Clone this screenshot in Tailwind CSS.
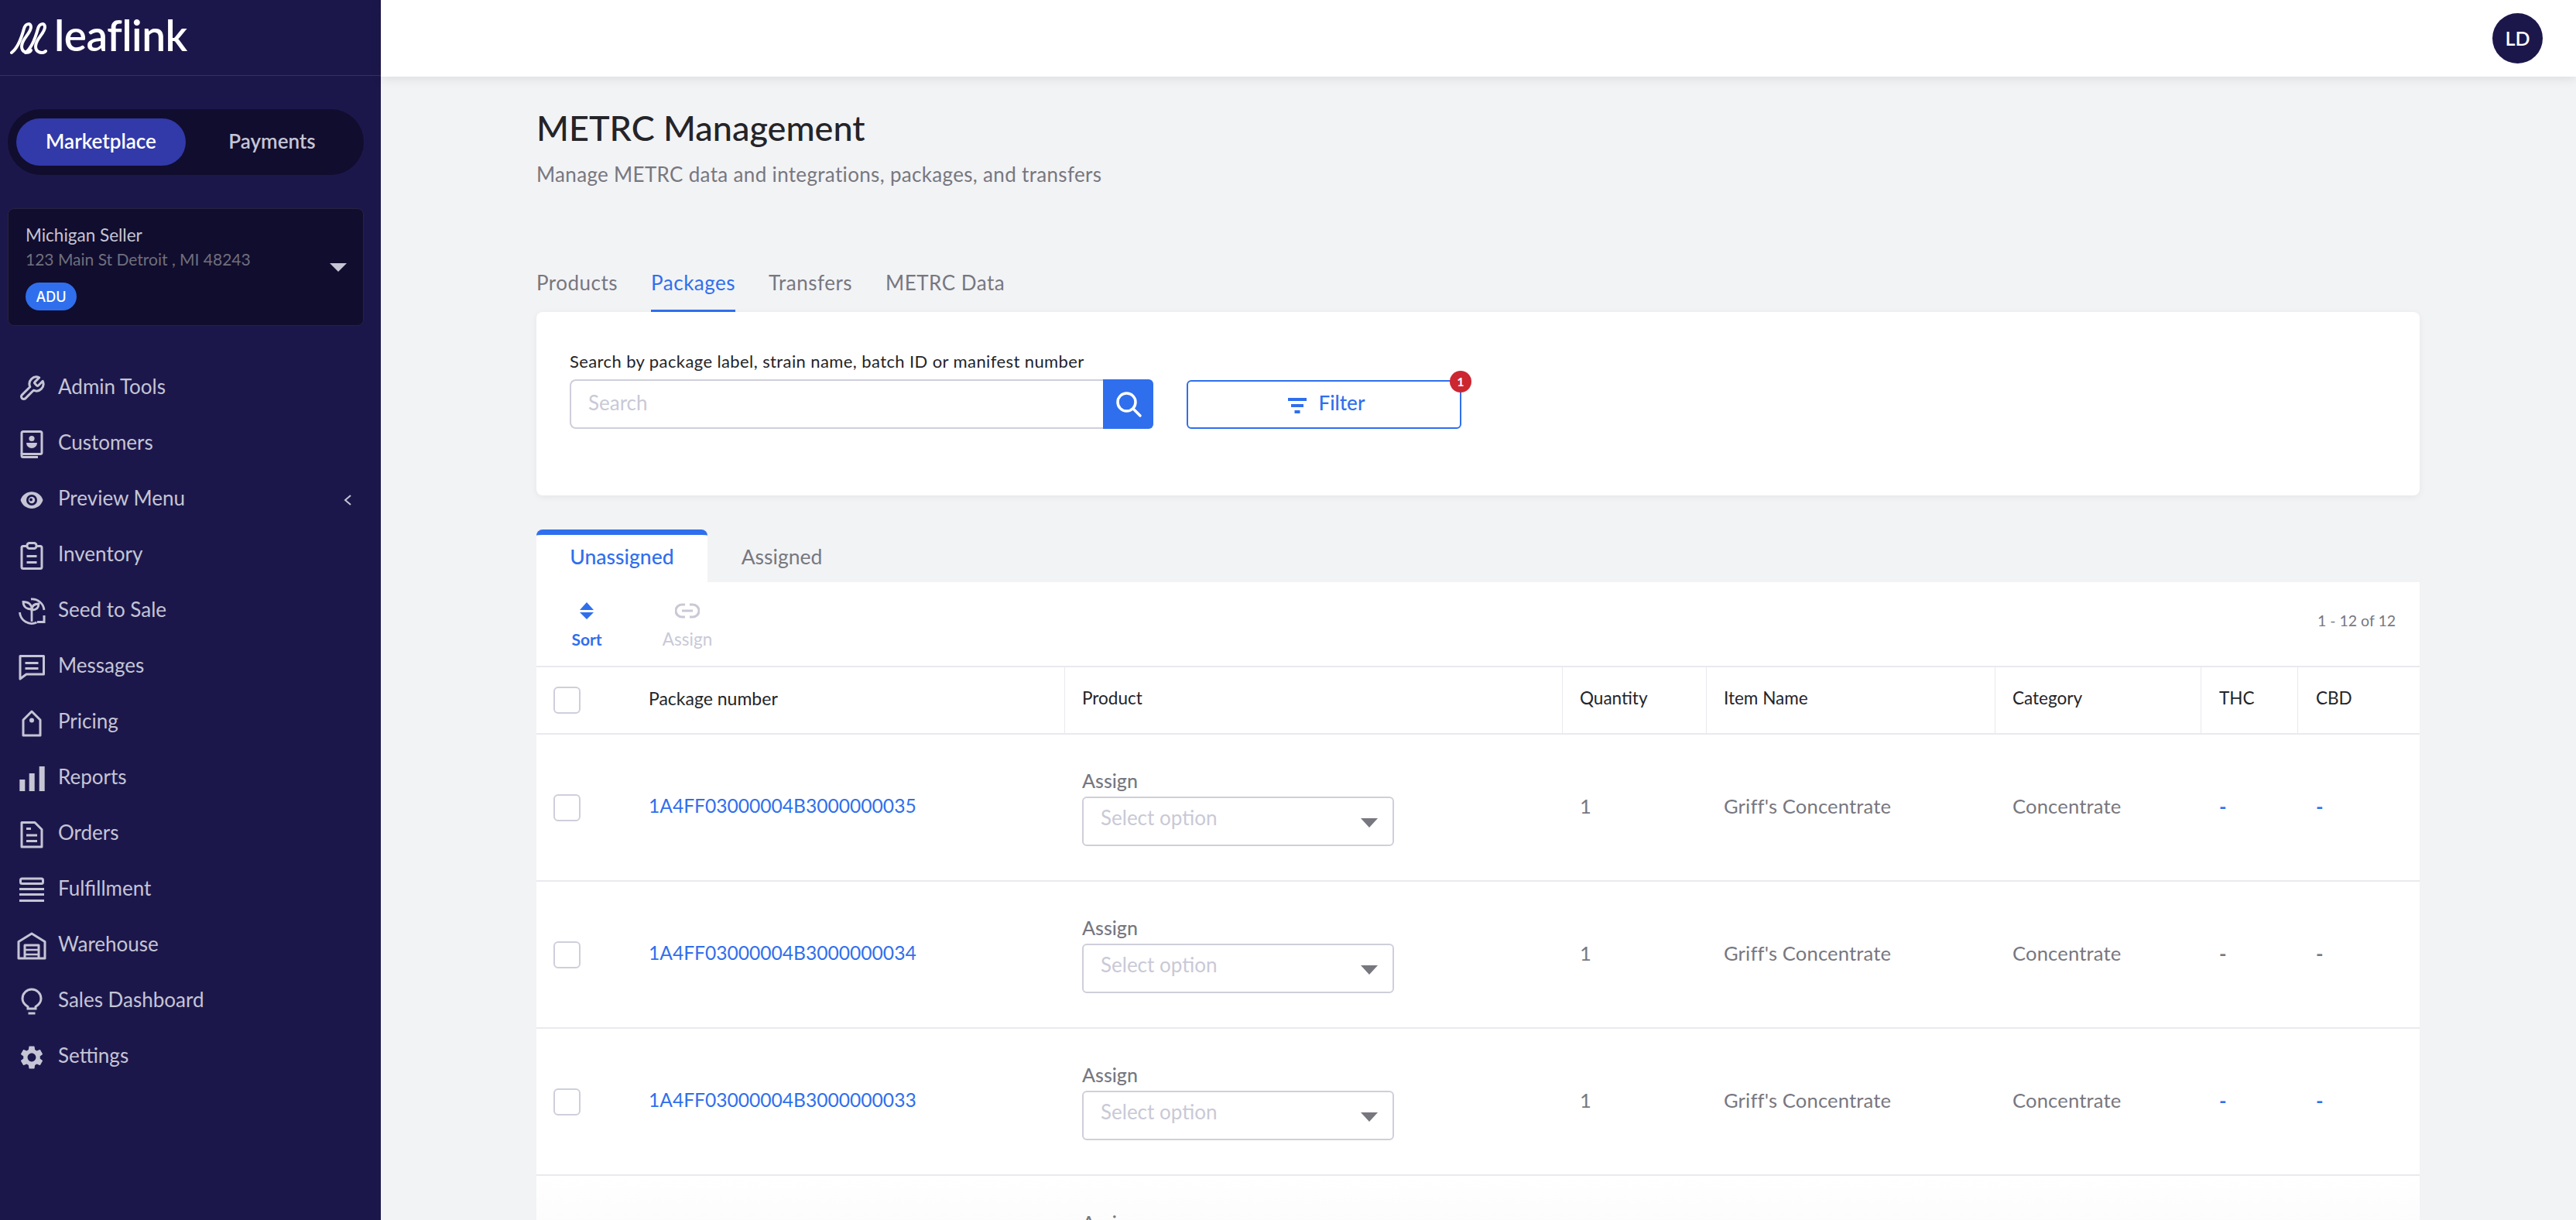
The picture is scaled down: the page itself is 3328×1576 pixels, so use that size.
<!DOCTYPE html>
<html lang="en">
<head>
<meta charset="utf-8">
<title>METRC Management</title>
<script src="https://cdn.jsdelivr.net/npm/@tailwindcss/browser@4"></script>
</head>
<body class="font-['Lato',sans-serif] bg-[#f2f3f5]">
<div class="flex h-[1576px] w-[3328px] overflow-hidden">
  <aside class="w-[492px] shrink-0 bg-[#1c174b] text-[#c5c5d5]">
    <div class="flex h-[98px] items-center gap-[9px] border-b border-[#35315f] pl-[13px]">
      <svg class="h-[42px] w-[48px]" viewBox="0 0 48 42" fill="none" stroke="#fff" stroke-width="4" stroke-linecap="round"><path d="M2 40C10 34 15 20 18 9C20 2 27 1 27 7C27 15 15 22 15 32C15 40 24 42 27 37"/><path d="M20 40C28 34 33 20 36 9C38 2 45 1 45 7C45 15 33 22 33 32C33 40 42 42 46 38"/></svg>
      <span class="pb-[6px] text-[55px] leading-none font-semibold tracking-[-0.5px] text-white">leaflink</span>
    </div>
    <div class="ml-[10px] mr-[22px] mt-[43px] flex h-[85px] items-center rounded-full bg-[#110d2e] px-[11px] text-[26px] font-semibold">
      <div class="flex h-[61px] w-[219px] items-center justify-center rounded-full bg-[#3239a9] pb-[2px] text-white">Marketplace</div>
      <div class="flex h-[61px] w-[219px] items-center justify-center pb-[2px] pl-[4px]">Payments</div>
    </div>
    <div class="relative ml-[10px] mr-[22px] mt-[43px] h-[152px] rounded-[8px] border border-[#26223f] bg-[#110d2e] pl-[22px] pt-[18px]">
      <div class="text-[22.5px] leading-[32px] text-[#c5c5d5]">Michigan Seller</div>
      <div class="text-[21px] leading-[30px] text-[#6f6f7d]">123 Main St Detroit , MI 48243</div>
      <div class="mt-[15px] flex h-[36px] w-[66px] items-center justify-center rounded-full bg-[#2f6fed] font-['Inter',sans-serif] text-[18px] font-medium text-white">ADU</div>
      <div class="absolute right-[21px] top-[70px] h-0 w-0 border-x-[11px] border-t-[11px] border-x-transparent border-t-[#c5c5d5]"></div>
    </div>
    <nav class="mt-[45px] text-[26px]">
      <a class="flex h-[72px] items-center pl-[23px]"><svg class="h-[36px] w-[36px]" viewBox="0 0 24 24" fill="none" stroke="#c5c5d5" stroke-width="2" stroke-linejoin="round"><path d="M14.7 6.3a1 1 0 0 0 0 1.4l1.6 1.6a1 1 0 0 0 1.4 0l3.77-3.77a6 6 0 0 1-7.94 7.94l-6.91 6.91a2.12 2.12 0 0 1-3-3l6.91-6.91a6 6 0 0 1 7.94-7.94l-3.76 3.76z"/></svg><span class="ml-[16px] pb-[6px]">Admin Tools</span></a>
      <a class="flex h-[72px] items-center pl-[23px]"><svg class="h-[36px] w-[36px]" viewBox="0 0 36 36" fill="none" stroke="#c5c5d5" stroke-width="3"><rect x="5" y="1.5" width="26" height="29" rx="2"/><path d="M5 29v3.5a2 2 0 0 0 2 2h19"/><circle cx="18" cy="10.5" r="3.6" fill="#c5c5d5" stroke="none"/><path d="M11 16h14a7 7 0 0 1-14 0z" fill="#c5c5d5" stroke="none"/></svg><span class="ml-[16px] pb-[6px]">Customers</span></a>
      <a class="flex h-[72px] items-center pl-[23px] pr-[37px]"><svg class="h-[36px] w-[36px]" viewBox="0 0 36 36"><path d="M3.500 18C8 3.500 28 3.500 32.500 18C28 32.500 8 32.500 3.500 18Z" fill="#c5c5d5"/><circle cx="18" cy="18" r="7" fill="#1c174b"/><circle cx="18" cy="18" r="4.200" fill="#c5c5d5"/><circle cx="17" cy="17.500" r="2" fill="#1c174b"/></svg><span class="ml-[16px] flex-1 pb-[6px]">Preview Menu</span><svg class="h-[16px] w-[12px]" viewBox="0 0 12 16" fill="none" stroke="#c5c5d5" stroke-width="2"><path d="M10 2L3 8l7 6"/></svg></a>
      <a class="flex h-[72px] items-center pl-[23px]"><svg class="h-[36px] w-[36px]" viewBox="0 0 36 36" fill="none" stroke="#c5c5d5" stroke-width="3"><rect x="5" y="5.500" width="26" height="29" rx="2"/><rect x="12" y="1.500" width="12" height="7" rx="3" fill="#1c174b"/><path d="M11.500 18.500h13M11.500 26.500h13"/></svg><span class="ml-[16px] pb-[6px]">Inventory</span></a>
      <a class="flex h-[72px] items-center pl-[23px]"><svg class="h-[36px] w-[36px]" viewBox="0 0 36 36" fill="none" stroke="#c5c5d5" stroke-width="2.800"><path d="M17 2a15.500 15.500 0 0 1 17 14"/><path d="M2.500 19a15.500 15.500 0 0 0 22 13"/><path d="M34 23v8.500h-9" stroke-width="3"/><path d="M18 15v16"/><path d="M18 15c0-6-4-9.500-11-9.500 0 6 4 9.500 11 9.500z"/><path d="M18 16c0-5 3-8 9-8 0 5-3 8-9 8z"/></svg><span class="ml-[16px] pb-[6px]">Seed to Sale</span></a>
      <a class="flex h-[72px] items-center pl-[23px]"><svg class="h-[36px] w-[36px]" viewBox="0 0 36 36" fill="none" stroke="#c5c5d5" stroke-width="3" stroke-linejoin="round"><path d="M3 3.500H33.500V27H11L3 33Z"/><path d="M9.500 12.500h17M9.500 19.500h17"/></svg><span class="ml-[16px] pb-[6px]">Messages</span></a>
      <a class="flex h-[72px] items-center pl-[23px]"><svg class="h-[36px] w-[36px]" viewBox="0 0 36 36" fill="none" stroke="#c5c5d5" stroke-width="3" stroke-linejoin="round"><path d="M7 34V14L18 3L29 14V34Z"/><circle cx="18" cy="14.500" r="3" fill="#c5c5d5" stroke="none"/></svg><span class="ml-[16px] pb-[6px]">Pricing</span></a>
      <a class="flex h-[72px] items-center pl-[23px]"><svg class="h-[36px] w-[36px]" viewBox="0 0 36 36" fill="#c5c5d5"><rect x="2.300" y="19" width="7" height="15"/><rect x="14.700" y="11" width="7" height="23"/><rect x="27.700" y="2" width="7" height="32"/></svg><span class="ml-[16px] pb-[6px]">Reports</span></a>
      <a class="flex h-[72px] items-center pl-[23px]"><svg class="h-[36px] w-[36px]" viewBox="0 0 36 36" fill="none" stroke="#c5c5d5" stroke-width="3" stroke-linejoin="round"><path d="M5 2.500H22L31 11.500V34H5Z"/><path d="M11 10.500h6M11 19h14M11 26.500h14"/></svg><span class="ml-[16px] pb-[6px]">Orders</span></a>
      <a class="flex h-[72px] items-center pl-[23px]"><svg class="h-[36px] w-[36px]" viewBox="0 0 36 36" fill="none" stroke="#c5c5d5" stroke-width="3"><rect x="3.500" y="3" width="29" height="6.500" rx="2"/><path d="M2 16.500h32M2 23.500h32M2 31.500h32"/></svg><span class="ml-[16px] pb-[6px]">Fulfillment</span></a>
      <a class="flex h-[72px] items-center pl-[23px]"><svg class="h-[36px] w-[36px] overflow-visible" viewBox="0 0 36 36" fill="none" stroke="#c5c5d5" stroke-width="3" stroke-linejoin="round"><path d="M1 34V12.500L18 2L35 12.500V34Z"/><path d="M9 34V17h18v17" /><path d="M9 23h18M9 29h18" stroke-width="2.500"/></svg><span class="ml-[16px] pb-[6px]">Warehouse</span></a>
      <a class="flex h-[72px] items-center pl-[23px]"><svg class="h-[36px] w-[36px]" viewBox="0 0 36 36" fill="none" stroke="#c5c5d5" stroke-width="3"><path d="M13 27v-2.500C9 22 6 18.500 6 14a12 12 0 0 1 24 0c0 4.500-3 8-7 10.500V27Z"/><path d="M13.500 33h9"/></svg><span class="ml-[16px] pb-[6px]">Sales Dashboard</span></a>
      <a class="flex h-[72px] items-center pl-[23px]"><svg class="h-[36px] w-[36px]" viewBox="0 0 24 24" fill="#c5c5d5"><path d="M19.140 12.940c.04-.3.06-.61.06-.94 0-.32-.02-.64-.07-.94l2.030-1.580c.18-.14.23-.41.12-.61l-1.920-3.320c-.12-.22-.37-.29-.59-.22l-2.390.96c-.5-.38-1.030-.7-1.620-.94l-.36-2.540c-.04-.24-.24-.41-.48-.41h-3.840c-.24 0-.43.17-.47.41l-.36 2.540c-.59.24-1.130.57-1.620.94l-2.390-.96c-.22-.08-.47 0-.59.22L2.740 8.870c-.12.21-.08.47.12.61l2.030 1.580c-.05.3-.09.63-.09.94s.02.64.07.94l-2.030 1.580c-.18.14-.23.41-.12.61l1.920 3.320c.12.22.37.29.59.22l2.390-.96c.5.38 1.030.7 1.620.94l.36 2.540c.05.24.24.41.48.41h3.840c.24 0 .44-.17.47-.41l.36-2.540c.59-.24 1.130-.56 1.620-.94l2.390.96c.22.08.47 0 .59-.22l1.920-3.320c.12-.22.07-.47-.12-.61l-2.010-1.580zM12 15.600c-1.980 0-3.600-1.620-3.600-3.600s1.620-3.600 3.600-3.600 3.600 1.620 3.600 3.600-1.620 3.600-3.600 3.600z"/></svg><span class="ml-[16px] pb-[6px]">Settings</span></a>
    </nav>
  </aside>
  <div class="flex min-w-0 flex-1 flex-col">
    <header class="relative z-10 flex h-[99px] shrink-0 items-center justify-end bg-white pr-[43px] shadow-[0_2px_14px_rgba(0,0,0,0.10)]">
      <div class="flex h-[65px] w-[65px] items-center justify-center rounded-full bg-[#1c174b] text-[25px] font-semibold text-white">LD</div>
    </header>
    <main class="pl-[201px] pr-[202px]">
      <h1 class="mt-[38px] text-[45px] leading-[56px] font-medium text-[#242428]">METRC Management</h1>
      <p class="mt-[14px] text-[26px] leading-[36px] tracking-[0.33px] text-[#77777f]">Manage METRC data and integrations, packages, and transfers</p>
      <div class="mt-[104px] flex gap-[43px] text-[26px] leading-[36px] tracking-[0.5px] text-[#77777f]">
        <span class="pb-[17px]">Products</span>
        <span class="border-b-[3px] border-[#2f6fed] pb-[17px] text-[#2f6fed]">Packages</span>
        <span class="pb-[17px]">Transfers</span>
        <span class="pb-[17px]">METRC Data</span>
      </div>
      <section class="h-[237px] rounded-[8px] bg-white px-[43px] pt-[50px] shadow-[0_2px_10px_rgba(0,0,0,0.06)]">
        <div class="text-[22px] leading-[28px] tracking-[0.4px] text-[#242428]">Search by package label, strain name, batch ID or manifest number</div>
        <div class="mt-[9px] flex">
          <div class="flex h-[64px] w-[689px] items-center rounded-l-[8px] border-2 border-r-0 border-[#cfcfdb] pb-[4px] pl-[22px] text-[26px] text-[#c9c9d6]">Search</div>
          <div class="flex h-[64px] w-[65px] items-center justify-center rounded-r-[6px] bg-[#2f6fed]"><svg class="h-[36px] w-[36px]" viewBox="0 0 36 36" fill="none" stroke="#fff" stroke-width="3.500" stroke-linecap="round"><circle cx="15.500" cy="15.500" r="11.500"/><path d="M24 24l9 9"/></svg></div>
          <div class="relative ml-[43px] mt-[1px] flex h-[63px] w-[355px] items-center justify-center gap-[16px] rounded-[6px] border-2 border-[#2f6fed] pl-[6px] text-[26px] font-medium text-[#2f6fed]">
            <svg class="h-[22px] w-[24px]" viewBox="0 0 24 22" fill="#2f6fed"><rect x="0" y="2" width="24" height="4"/><rect x="4" y="10" width="16" height="4"/><rect x="8.500" y="18" width="7" height="4"/></svg>
            <span class="pb-[4px]">Filter</span>
            <div class="absolute right-[-15px] top-[-14px] flex h-[28px] w-[28px] items-center justify-center rounded-full bg-[#cc2631] text-[16px] font-bold text-white">1</div>
          </div>
        </div>
      </section>
      <div class="mt-[44px] flex text-[26.5px]">
        <div class="flex h-[68px] w-[221px] items-center justify-center rounded-t-[8px] border-t-[7px] border-[#2f6fed] bg-white pb-[4px] font-medium text-[#2f6fed]">Unassigned</div>
        <div class="flex h-[68px] w-[190px] items-center justify-center pt-[4px] pl-[2px] text-[#77777f]">Assigned</div>
      </div>
      <section class="h-[900px] bg-white">
        <div class="flex h-[108px] items-start justify-between pl-[37px] pr-[31px]">
          <div class="flex gap-[70px] pt-[25px]">
            <div class="flex w-[56px] flex-col items-center">
              <svg class="h-[24px] w-[20px]" viewBox="0 0 20 24" fill="#2f6fed"><path d="M10 1L19 11H1Z"/><path d="M10 23L19 14H1Z"/></svg>
              <span class="mt-[11px] text-[21px] leading-[28px] font-bold text-[#2f6fed]">Sort</span>
            </div>
            <div class="flex w-[64px] flex-col items-center">
              <svg class="h-[24px] w-[32px]" viewBox="0 0 32 24" fill="none" stroke="#c9c9d6" stroke-width="3"><path d="M13 4H9a8 8 0 0 0 0 16h4M19 4h4a8 8 0 0 1 0 16h-4M9 12h14"/></svg>
              <span class="mt-[11px] text-[22.5px] leading-[28px] text-[#c9c9d6]">Assign</span>
            </div>
          </div>
          <div class="pt-[36px] text-[19.5px] leading-[28px] text-[#77777f]">1 - 12 of 12</div>
        </div>
        <div class="grid h-[89px] grid-cols-[683px_643px_186px_373px_266px_125px_157px] border-y-2 border-[#e9e9ef] text-[22.5px] text-[#242428]">
          <div class="flex items-center border-r border-[#e9e9ef] pl-[22px]"><span class="h-[35px] w-[35px] rounded-[6px] border-2 border-[#cfcfdb]"></span><span class="ml-[88px] pb-[5px] text-[23px]">Package number</span></div>
          <div class="flex items-center border-r border-[#e9e9ef] pb-[5px] pl-[22px]">Product</div>
          <div class="flex items-center border-r border-[#e9e9ef] pb-[5px] pl-[22px]">Quantity</div>
          <div class="flex items-center border-r border-[#e9e9ef] pb-[5px] pl-[22px]">Item Name</div>
          <div class="flex items-center border-r border-[#e9e9ef] pb-[5px] pl-[22px]">Category</div>
          <div class="flex items-center border-r border-[#e9e9ef] pb-[5px] pl-[23px]">THC</div>
          <div class="flex items-center pb-[5px] pl-[23px]">CBD</div>
        </div>
        <div class="grid h-[190px] grid-cols-[683px_643px_186px_373px_266px_125px_157px] border-b-2 border-[#e9e9ef] text-[25.5px] tracking-[0.2px] text-[#77777f]">
          <div class="flex items-center pl-[22px]"><span class="h-[35px] w-[35px] rounded-[6px] border-2 border-[#cfcfdb]"></span><span class="ml-[88px] pb-[4px] text-[24.6px] tracking-normal text-[#2f6fed]">1A4FF03000004B3000000035</span></div>
          <div class="flex flex-col justify-center pl-[22px]"><span class="text-[25px] leading-[28px] font-medium tracking-normal">Assign</span><div class="relative mt-[7px] h-[64px] w-[403px] rounded-[6px] border-2 border-[#cfcfdb] pl-[22px] pt-[10px] text-[26px] leading-[30px] tracking-normal text-[#c9c9d6]">Select option<span class="absolute right-[19px] top-[26px] h-0 w-0 border-x-[11px] border-t-[12px] border-x-transparent border-t-[#77777f]"></span></div></div>
          <div class="flex items-center pb-[4px] pl-[22px]">1</div>
          <div class="flex items-center pb-[4px] pl-[22px]">Griff's Concentrate</div>
          <div class="flex items-center pb-[4px] pl-[22px]">Concentrate</div>
          <div class="flex items-center pb-[4px] pl-[23px] font-bold text-[#2f6fed]">-</div>
          <div class="flex items-center pb-[4px] pl-[23px] font-bold text-[#2f6fed]">-</div>
        </div>
        <div class="grid h-[190px] grid-cols-[683px_643px_186px_373px_266px_125px_157px] border-b-2 border-[#e9e9ef] text-[25.5px] tracking-[0.2px] text-[#77777f]">
          <div class="flex items-center pl-[22px]"><span class="h-[35px] w-[35px] rounded-[6px] border-2 border-[#cfcfdb]"></span><span class="ml-[88px] pb-[4px] text-[24.6px] tracking-normal text-[#2f6fed]">1A4FF03000004B3000000034</span></div>
          <div class="flex flex-col justify-center pl-[22px]"><span class="text-[25px] leading-[28px] font-medium tracking-normal">Assign</span><div class="relative mt-[7px] h-[64px] w-[403px] rounded-[6px] border-2 border-[#cfcfdb] pl-[22px] pt-[10px] text-[26px] leading-[30px] tracking-normal text-[#c9c9d6]">Select option<span class="absolute right-[19px] top-[26px] h-0 w-0 border-x-[11px] border-t-[12px] border-x-transparent border-t-[#77777f]"></span></div></div>
          <div class="flex items-center pb-[4px] pl-[22px]">1</div>
          <div class="flex items-center pb-[4px] pl-[22px]">Griff's Concentrate</div>
          <div class="flex items-center pb-[4px] pl-[22px]">Concentrate</div>
          <div class="flex items-center pb-[4px] pl-[23px] font-bold">-</div>
          <div class="flex items-center pb-[4px] pl-[23px] font-bold">-</div>
        </div>
        <div class="grid h-[190px] grid-cols-[683px_643px_186px_373px_266px_125px_157px] border-b-2 border-[#e9e9ef] text-[25.5px] tracking-[0.2px] text-[#77777f]">
          <div class="flex items-center pl-[22px]"><span class="h-[35px] w-[35px] rounded-[6px] border-2 border-[#cfcfdb]"></span><span class="ml-[88px] pb-[4px] text-[24.6px] tracking-normal text-[#2f6fed]">1A4FF03000004B3000000033</span></div>
          <div class="flex flex-col justify-center pl-[22px]"><span class="text-[25px] leading-[28px] font-medium tracking-normal">Assign</span><div class="relative mt-[7px] h-[64px] w-[403px] rounded-[6px] border-2 border-[#cfcfdb] pl-[22px] pt-[10px] text-[26px] leading-[30px] tracking-normal text-[#c9c9d6]">Select option<span class="absolute right-[19px] top-[26px] h-0 w-0 border-x-[11px] border-t-[12px] border-x-transparent border-t-[#77777f]"></span></div></div>
          <div class="flex items-center pb-[4px] pl-[22px]">1</div>
          <div class="flex items-center pb-[4px] pl-[22px]">Griff's Concentrate</div>
          <div class="flex items-center pb-[4px] pl-[22px]">Concentrate</div>
          <div class="flex items-center pb-[4px] pl-[23px] font-bold text-[#2f6fed]">-</div>
          <div class="flex items-center pb-[4px] pl-[23px] font-bold text-[#2f6fed]">-</div>
        </div>
        <div class="grid h-[190px] grid-cols-[683px_643px_186px_373px_266px_125px_157px] bg-linear-to-b from-white to-[#f6f6f8] text-[25.5px] tracking-[0.2px] text-[#77777f]">
          <div></div>
          <div class="flex flex-col justify-center pl-[22px]"><span class="text-[25px] leading-[28px] font-medium tracking-normal">Assign</span><div class="mt-[7px] h-[64px] w-[403px] rounded-[6px] border-2 border-[#cfcfdb]"></div></div>
        </div>
      </section>
    </main>
  </div>
</div>
</body>
</html>
